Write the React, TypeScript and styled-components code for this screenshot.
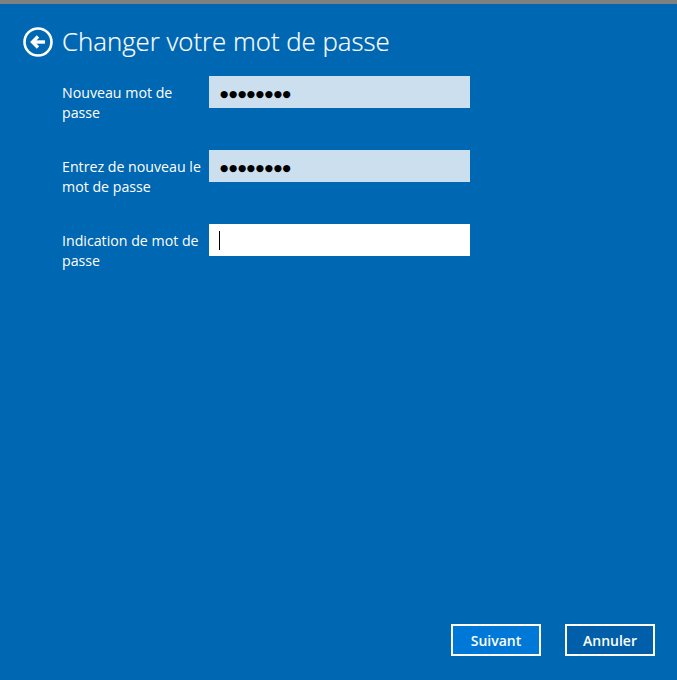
import React from "react";
import styled, { createGlobalStyle } from "styled-components";

const Global = createGlobalStyle`
  html, body { margin: 0; padding: 0; height: 100%; background: #0067b2; }
  #root { height: 100%; }
`;

const Page = styled.div`
  box-sizing: border-box;
  height: 680px;
  border-top: 4px solid #808080;
  background: #0067b2;
  display: flex;
  flex-direction: column;
  color: #fff;
  font-family: "Open Sans", "Noto Sans", "Liberation Sans", sans-serif;
  overflow: hidden;
`;

const Header = styled.header`
  display: flex;
  align-items: center;
  gap: 9px;
  padding: 23px 0 0 23px;
  height: 30px;
`;

const BackIcon = styled.svg`
  width: 30px;
  height: 30px;
  display: block;
  flex: none;
`;

const Title = styled.h1`
  margin: -2px 0 0;
  font-size: 25.8px;
  font-weight: 300;
  line-height: 30px;
  white-space: nowrap;
  -webkit-text-stroke: 0.2px #fff;
`;

const Form = styled.div`
  display: flex;
  flex-direction: column;
  gap: 42px;
  padding: 19px 0 0 62px;
`;

const Row = styled.div`
  display: flex;
  height: 32px;
`;

const Label = styled.label`
  width: 147px;
  flex: none;
  font-size: 14.2px;
  line-height: 20px;
  padding-top: 7px;
`;

const Field = styled.div<{ $focused?: boolean }>`
  width: 261px;
  height: 32px;
  box-sizing: border-box;
  padding-left: 10px;
  display: flex;
  align-items: center;
  background: ${(p) => (p.$focused ? "#ffffff" : "#cbdfef")};
  color: #000;
`;

const Dots = styled.span`
  font-family: "DejaVu Sans", sans-serif;
  font-size: 9.5px;
  letter-spacing: 0.65px;
  line-height: 32px;
  margin: 3px 0 0 1px;
`;

const Caret = styled.span`
  display: block;
  width: 1px;
  height: 19px;
  background: #000;
`;

const Footer = styled.footer`
  margin-top: auto;
  display: flex;
  justify-content: flex-end;
  gap: 24px;
  padding: 0 22px 24px 0;
`;

const Button = styled.button<{ $primary?: boolean }>`
  width: 90px;
  height: 32px;
  box-sizing: border-box;
  border: 2px solid #fff;
  border-radius: 0;
  padding: 0;
  background: ${(p) => (p.$primary ? "#0078d7" : "#005fa8")};
  color: #fff;
  font-family: inherit;
  font-size: 14px;
  font-weight: 600;
`;

export default function App() {
  return (
    <Page>
      <Global />
      <Header>
        <BackIcon viewBox="0 0 30 30" fill="none" stroke="#fff" aria-label="Retour">
          <circle cx="15" cy="15" r="13.5" strokeWidth="2.6" />
          <path d="M22 15H10" strokeWidth="3.4" />
          <path d="M15 9.5 9.5 15l5.5 5.5" strokeWidth="3.4" />
        </BackIcon>
        <Title>Changer votre mot de passe</Title>
      </Header>
      <Form>
        <Row>
          <Label>Nouveau mot de<br />passe</Label>
          <Field><Dots>●●●●●●●●</Dots></Field>
        </Row>
        <Row>
          <Label>Entrez de nouveau le<br />mot de passe</Label>
          <Field><Dots>●●●●●●●●</Dots></Field>
        </Row>
        <Row>
          <Label>Indication de mot de<br />passe</Label>
          <Field $focused><Caret /></Field>
        </Row>
      </Form>
      <Footer>
        <Button $primary>Suivant</Button>
        <Button>Annuler</Button>
      </Footer>
    </Page>
  );
}
